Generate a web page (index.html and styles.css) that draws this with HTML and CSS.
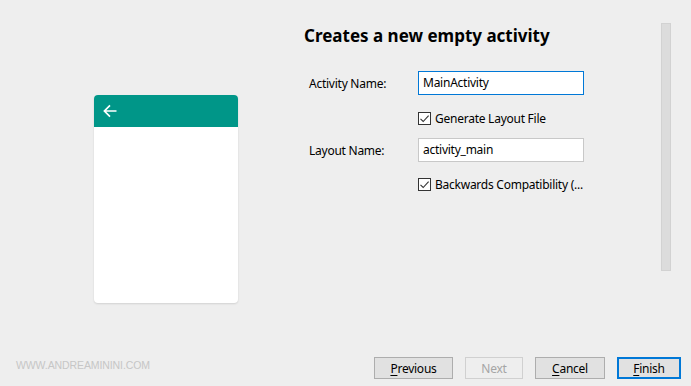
FILE: index.html
```html
<!DOCTYPE html>
<html>
<head>
<meta charset="utf-8">
<link rel="stylesheet" href="styles.css">
</head>
<body>
<div class="dialog">
  <div class="main">
    <div class="preview">
      <div class="phone">
        <div class="phone-bar">
          <svg class="back" width="16" height="16" viewBox="0 0 16 16"><path d="M14.5 8H2.4M8 2.4L2.4 8L8 13.6" fill="none" stroke="#fff" stroke-width="1.7"/></svg>
        </div>
        <div class="phone-body"></div>
      </div>
    </div>
    <div class="content">
      <h1 class="title">Creates a new empty activity</h1>
      <div class="form">
        <label class="label row-a">Activity Name:</label>
        <div class="input focused row-a">MainActivity</div>
        <div class="check row-b"><span class="box"><svg width="11" height="11" viewBox="0 0 11 11"><path d="M1.5 5.8L4.2 8.5L9.6 2.6" fill="none" stroke="#333" stroke-width="1.1"/></svg></span>Generate Layout File</div>
        <label class="label row-c">Layout Name:</label>
        <div class="input row-c">activity_main</div>
        <div class="check row-d"><span class="box"><svg width="11" height="11" viewBox="0 0 11 11"><path d="M1.5 5.8L4.2 8.5L9.6 2.6" fill="none" stroke="#333" stroke-width="1.1"/></svg></span>Backwards Compatibility (...</div>
      </div>
    </div>
    <div class="scroll"><div class="thumb"></div></div>
  </div>
  <div class="footer">
    <div class="watermark">WWW.ANDREAMININI.COM</div>
    <div class="buttons">
      <button class="btn btn-prev"><u>P</u>revious</button>
      <button class="btn btn-next" disabled>Next</button>
      <button class="btn btn-cancel"><u>C</u>ancel</button>
      <button class="btn btn-finish"><u>F</u>inish</button>
    </div>
  </div>
</div>
</body>
</html>
```
FILE: styles.css
```css
* { box-sizing: border-box; }
html, body { margin: 0; padding: 0; }
body {
  background: #eeeeee;
  font-family: "Noto Sans", "Open Sans", sans-serif;
  font-size: 12px;
  letter-spacing: -0.25px;
  color: #000;
}
.dialog {
  width: 691px;
  height: 386px;
  display: flex;
  flex-direction: column;
}
.main {
  flex: 1;
  display: flex;
}
.preview {
  width: 304px;
  padding: 95px 0 0 94px;
}
.phone {
  width: 144px;
  height: 208px;
  border-radius: 4px;
  background: #fff;
  box-shadow: 0 1px 2px rgba(0,0,0,0.12);
  overflow: hidden;
}
.phone-bar {
  height: 32px;
  background: #009688;
  display: flex;
  align-items: center;
  padding-left: 8px;
}
.back { display: block; }
.content {
  flex: 1;
  padding-top: 24px;
}
.title {
  margin: 0;
  font-size: 17px;
  font-weight: 700;
  line-height: 24px;
  letter-spacing: 0;
}
.form {
  margin-top: 23px;
  margin-left: 5px;
  display: grid;
  grid-template-columns: 109px 166px;
  grid-template-rows: 24px 43px 24px 44px;
  align-items: center;
}
.label { grid-column: 1; }
.input {
  grid-column: 2;
  height: 24px;
  background: #fff;
  border: 1px solid #c8c8c8;
  padding: 0 0 0 4px;
  line-height: 22px;
  white-space: nowrap;
}
.input.focused { border-color: #0078d7; }
.row-a { grid-row: 1; }
.row-b { grid-row: 2; padding-top: 3px; }
.row-c { grid-row: 3; }
.row-d { grid-row: 4; }
.check {
  grid-column: 2;
  display: flex;
  align-items: center;
  white-space: nowrap;
}
.box {
  width: 13px;
  height: 13px;
  border: 1px solid #333;
  background: #fff;
  margin-right: 4px;
  display: flex;
  align-items: center;
  justify-content: center;
}
.box svg { display: block; }
.scroll {
  width: 30px;
  padding: 23px 20px 0 0;
}
.thumb {
  width: 10px;
  height: 248px;
  background: #dcdcdc;
  border: 1px solid #d2d2d2;
}
.footer {
  height: 29px;
  display: flex;
  justify-content: space-between;
  align-items: flex-start;
  padding: 0 10px 0 16px;
}
.watermark {
  font-family: "Liberation Sans", Arial, sans-serif;
  font-size: 10.5px;
  letter-spacing: -0.1px;
  color: #c6c6c6;
  margin-top: 2px;
}
.buttons {
  display: flex;
  gap: 12px;
}
.btn {
  height: 22px;
  font-family: inherit;
  font-size: 12px;
  letter-spacing: -0.25px;
  background: #e1e1e1;
  border: 1px solid #adadad;
  color: #000;
  padding: 0;
  margin: 0;
}
.btn u { text-decoration-thickness: 1px; text-underline-offset: 2px; }
.btn-prev { width: 79px; }
.btn-next { width: 58px; color: #a5a5a5; background: #eeeeee; border-color: #d0d0d0; }
.btn-cancel { width: 70px; }
.btn-finish { width: 64px; border: 2px solid #0078d7; }
```
